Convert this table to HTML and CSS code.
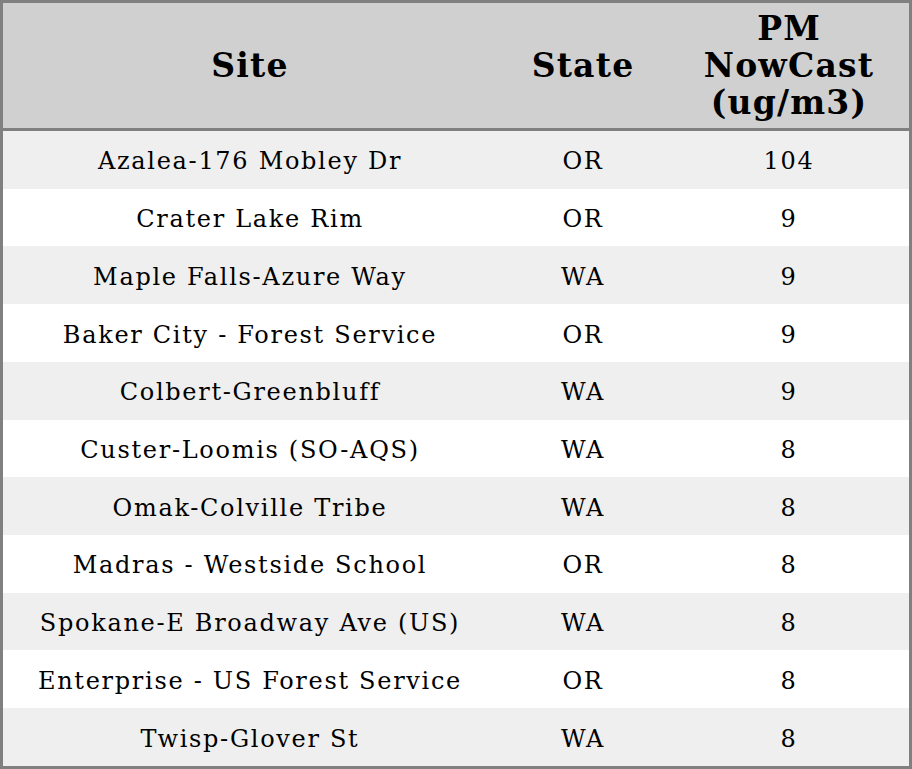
FILE: index.html
```html
<!DOCTYPE html>
<html>
<head>
<meta charset="utf-8">
<link rel="stylesheet" href="styles.css">
</head>
<body>
<table class="aq-table">
  <colgroup>
    <col class="col-site">
    <col class="col-state">
    <col class="col-pm">
  </colgroup>
  <thead>
    <tr>
      <th>Site</th>
      <th>State</th>
      <th>PM<br>NowCast<br>(ug/m3)</th>
    </tr>
  </thead>
  <tbody>
    <tr><td>Azalea-176 Mobley Dr</td><td>OR</td><td>104</td></tr>
    <tr><td>Crater Lake Rim</td><td>OR</td><td>9</td></tr>
    <tr><td>Maple Falls-Azure Way</td><td>WA</td><td>9</td></tr>
    <tr><td>Baker City - Forest Service</td><td>OR</td><td>9</td></tr>
    <tr><td>Colbert-Greenbluff</td><td>WA</td><td>9</td></tr>
    <tr><td>Custer-Loomis (SO-AQS)</td><td>WA</td><td>8</td></tr>
    <tr><td>Omak-Colville Tribe</td><td>WA</td><td>8</td></tr>
    <tr><td>Madras - Westside School</td><td>OR</td><td>8</td></tr>
    <tr><td>Spokane-E Broadway Ave (US)</td><td>WA</td><td>8</td></tr>
    <tr><td>Enterprise - US Forest Service</td><td>OR</td><td>8</td></tr>
    <tr><td>Twisp-Glover St</td><td>WA</td><td>8</td></tr>
  </tbody>
</table>
</body>
</html>
```
FILE: styles.css
```css
html, body {
  margin: 0;
  padding: 0;
  background: #ffffff;
}
.aq-table {
  width: 912px;
  height: 769px;
  border-collapse: separate;
  border-spacing: 0;
  border: 3px solid #808080;
  font-family: "DejaVu Serif", serif;
  color: #000;
  table-layout: fixed;
}
.col-site { width: 494px; }
.col-state { width: 172px; }
.col-pm { width: 240px; }
.aq-table th {
  background: #d0d0d0;
  font-size: 33px;
  font-weight: bold;
  letter-spacing: 1.2px;
  line-height: 37px;
  height: 125px;
  padding: 0;
  text-align: center;
  vertical-align: middle;
  border-bottom: 3px solid #808080;
}
.aq-table td {
  font-size: 24px;
  letter-spacing: 1.7px;
  text-align: center;
  vertical-align: middle;
  padding: 3px 0 0;
  height: 57.7px;
  box-sizing: border-box;
}
.aq-table tbody tr:nth-child(odd) td {
  background: #efefef;
}
.aq-table tbody tr:nth-child(even) td {
  background: #ffffff;
}
```
